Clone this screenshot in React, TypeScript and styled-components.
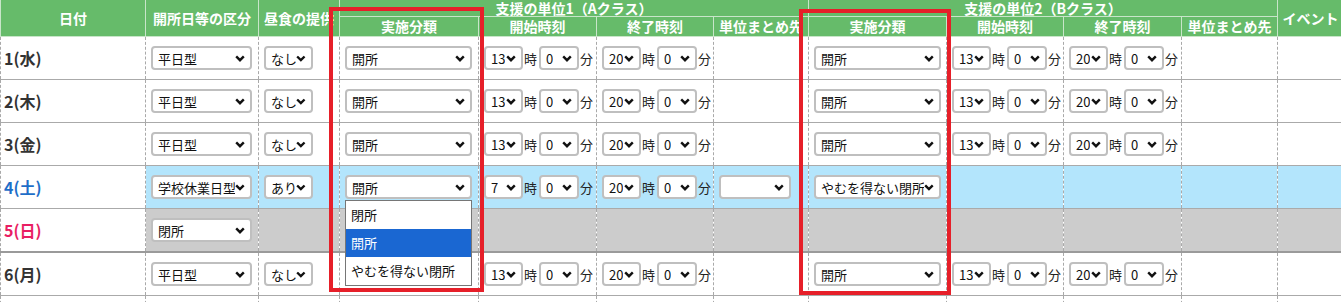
import styled, { createGlobalStyle } from "styled-components"

const GlobalStyle = createGlobalStyle`
  body {
    margin: 0;
    background: #fff;
    font-family: "Noto Sans CJK JP", "Noto Sans", sans-serif;
  }
`

const Wrap = styled.div`
  position: relative;
  width: 1341px;
  height: 302px;
  overflow: hidden;
`

const Table = styled.table`
  border-collapse: collapse;
  table-layout: fixed;
  width: 1343px;
`

const Head = styled.th<{ $h: number; $free?: boolean }>`
  height: ${({ $h }) => $h}px;
  padding: 0;
  background: #66bb6a;
  color: #fff;
  font-size: 14px;
  font-weight: bold;
  line-height: ${({ $h }) => $h}px;
  text-align: center;
  white-space: nowrap;
  overflow: ${({ $free }) => ($free ? "visible" : "hidden")};
  border: 1px solid #c8e5c9;
  border-top: none;
`

const Cell = styled.td<{ $tone?: "blue" | "grey"; $thick?: boolean }>`
  height: 42px;
  padding: 0 0 0 5px;
  background: ${({ $tone }) =>
    $tone === "blue" ? "#b3e5fc" : $tone === "grey" ? "#cccccc" : "#fff"};
  border-left: 1px dashed #a9a9a9;
  border-right: 1px dashed #a9a9a9;
  border-bottom: ${({ $thick }) => ($thick ? "2px solid #9a9a9a" : "1px solid #aaa")};
  vertical-align: middle;
  position: relative;
`

const DateCell = styled(Cell)<{ $color: string }>`
  padding-left: 3px;
  color: ${({ $color }) => $color};
  font-size: 16px;
  font-weight: bold;
`

const Box = styled.div<{ $w: number }>`
  box-sizing: border-box;
  display: flex;
  align-items: center;
  justify-content: space-between;
  width: ${({ $w }) => $w}px;
  height: 24px;
  padding: 0 5px 0 5px;
  background: #fff;
  border: 2px solid #bfbfbf;
  border-radius: 4px;
  font-size: 13px;
  color: #111;
  white-space: nowrap;
  overflow: hidden;
  position: relative;
`

const Label = styled.span`
  overflow: hidden;
`

const Times = styled.div`
  display: flex;
  align-items: center;
  gap: 1px;
  font-size: 13px;
  color: #222;
`

const Suffix = styled.span`
  width: 13px;
  margin-right: 1px;
`

const Anchor = styled.div`
  position: relative;
  width: 127px;
`

const Menu = styled.ul`
  position: absolute;
  top: 25px;
  left: 0;
  z-index: 5;
  box-sizing: border-box;
  width: 127px;
  margin: 0;
  padding: 0;
  list-style: none;
  background: #fff;
  border: 1px solid #767676;
`

const Option = styled.li<{ $active?: boolean }>`
  height: 28px;
  padding-left: 5px;
  line-height: 28px;
  font-size: 13px;
  white-space: nowrap;
  background: ${({ $active }) => ($active ? "#1a67d2" : "#fff")};
  color: ${({ $active }) => ($active ? "#fff" : "#111")};
`

const Mark = styled.div<{ $x: number; $y: number; $w: number; $h: number }>`
  position: absolute;
  left: ${({ $x }) => $x}px;
  top: ${({ $y }) => $y}px;
  width: ${({ $w }) => $w}px;
  height: ${({ $h }) => $h}px;
  box-sizing: border-box;
  border: 4px solid #e61f29;
  z-index: 6;
  pointer-events: none;
`

function Chevron() {
  return (
    <svg width="10" height="7" viewBox="0 0 10 7">
      <path d="M1.2 1.4 L5 5.2 L8.8 1.4" fill="none" stroke="#111" strokeWidth="2.4" />
    </svg>
  )
}

function Select({ w, value }: { w: number; value: string }) {
  return (
    <Box $w={w}>
      <Label>{value}</Label>
      <Chevron />
    </Box>
  )
}

function Time({ h, m }: { h: string; m: string }) {
  return (
    <Times>
      <Select w={39} value={h} />
      <Suffix>時</Suffix>
      <Select w={40} value={m} />
      <Suffix>分</Suffix>
    </Times>
  )
}

type Unit = { kind: string; sh?: string; eh?: string; blank?: boolean; open?: boolean }
type Row = {
  date: string
  color: string
  type: string
  lunch?: string
  tone?: "blue" | "grey"
  a?: Unit
  b?: Unit
}

const std: Unit = { kind: "開所", sh: "13", eh: "20" }

const rows: Row[] = [
  { date: "1(水)", color: "#333", type: "平日型", lunch: "なし", a: std, b: std },
  { date: "2(木)", color: "#333", type: "平日型", lunch: "なし", a: std, b: std },
  { date: "3(金)", color: "#333", type: "平日型", lunch: "なし", a: std, b: std },
  {
    date: "4(土)",
    color: "#1e6ec8",
    type: "学校休業日型",
    lunch: "あり",
    tone: "blue",
    a: { kind: "開所", sh: "7", eh: "20", blank: true, open: true },
    b: { kind: "やむを得ない閉所" },
  },
  { date: "5(日)", color: "#e91e63", type: "閉所", tone: "grey" },
  { date: "6(月)", color: "#333", type: "平日型", lunch: "なし", a: std, b: std },
]

const widths = [145, 113, 81, 139, 118, 117, 95, 138, 117, 118, 96, 66]

function UnitCells({ u, tone, thick }: { u?: Unit; tone?: "blue" | "grey"; thick?: boolean }) {
  return (
    <>
      <Cell $tone={tone} $thick={thick}>
        {u && (
          <Anchor>
            <Select w={127} value={u.kind} />
            {u.open && (
              <Menu>
                <Option>閉所</Option>
                <Option $active>開所</Option>
                <Option>やむを得ない閉所</Option>
              </Menu>
            )}
          </Anchor>
        )}
      </Cell>
      <Cell $tone={tone} $thick={thick}>{u?.sh && <Time h={u.sh} m="0" />}</Cell>
      <Cell $tone={tone} $thick={thick}>{u?.eh && <Time h={u.eh} m="0" />}</Cell>
      <Cell $tone={tone} $thick={thick}>{u?.blank && <Select w={72} value="" />}</Cell>
    </>
  )
}

export default function App() {
  return (
    <Wrap>
      <GlobalStyle />
      <Table>
        <colgroup>
          {widths.map((w, i) => (
            <col key={i} style={{ width: w }} />
          ))}
        </colgroup>
        <thead>
          <tr>
            <Head $h={36} rowSpan={2}>日付</Head>
            <Head $h={36} rowSpan={2}>開所日等の区分</Head>
            <Head $h={36} rowSpan={2}>昼食の提供</Head>
            <Head $h={16} $free colSpan={4}>支援の単位1（Aクラス）</Head>
            <Head $h={16} $free colSpan={4}>支援の単位2（Bクラス）</Head>
            <Head $h={36} rowSpan={2}>イベント</Head>
          </tr>
          <tr>
            <Head $h={19}>実施分類</Head>
            <Head $h={19}>開始時刻</Head>
            <Head $h={19}>終了時刻</Head>
            <Head $h={19}>単位まとめ先</Head>
            <Head $h={19}>実施分類</Head>
            <Head $h={19}>開始時刻</Head>
            <Head $h={19}>終了時刻</Head>
            <Head $h={19}>単位まとめ先</Head>
          </tr>
        </thead>
        <tbody>
          {rows.map((r) => {
            const thick = r.tone === "grey"
            return (
              <tr key={r.date}>
                <DateCell $color={r.color} $thick={thick}>{r.date}</DateCell>
                <Cell $tone={r.tone} $thick={thick}>
                  <Select w={101} value={r.type} />
                </Cell>
                <Cell $tone={r.tone} $thick={thick}>
                  {r.lunch && <Select w={49} value={r.lunch} />}
                </Cell>
                <UnitCells u={r.a} tone={r.tone} thick={thick} />
                <UnitCells u={r.b} tone={r.tone} thick={thick} />
                <Cell $tone={r.tone} $thick={thick} />
              </tr>
            )
          })}
          <tr>
            {widths.map((_, i) => (
              <Cell key={i} />
            ))}
          </tr>
        </tbody>
      </Table>
      <Mark $x={329} $y={7} $w={155} $h={285} />
      <Mark $x={799} $y={9} $w={152} $h={286} />
    </Wrap>
  )
}
